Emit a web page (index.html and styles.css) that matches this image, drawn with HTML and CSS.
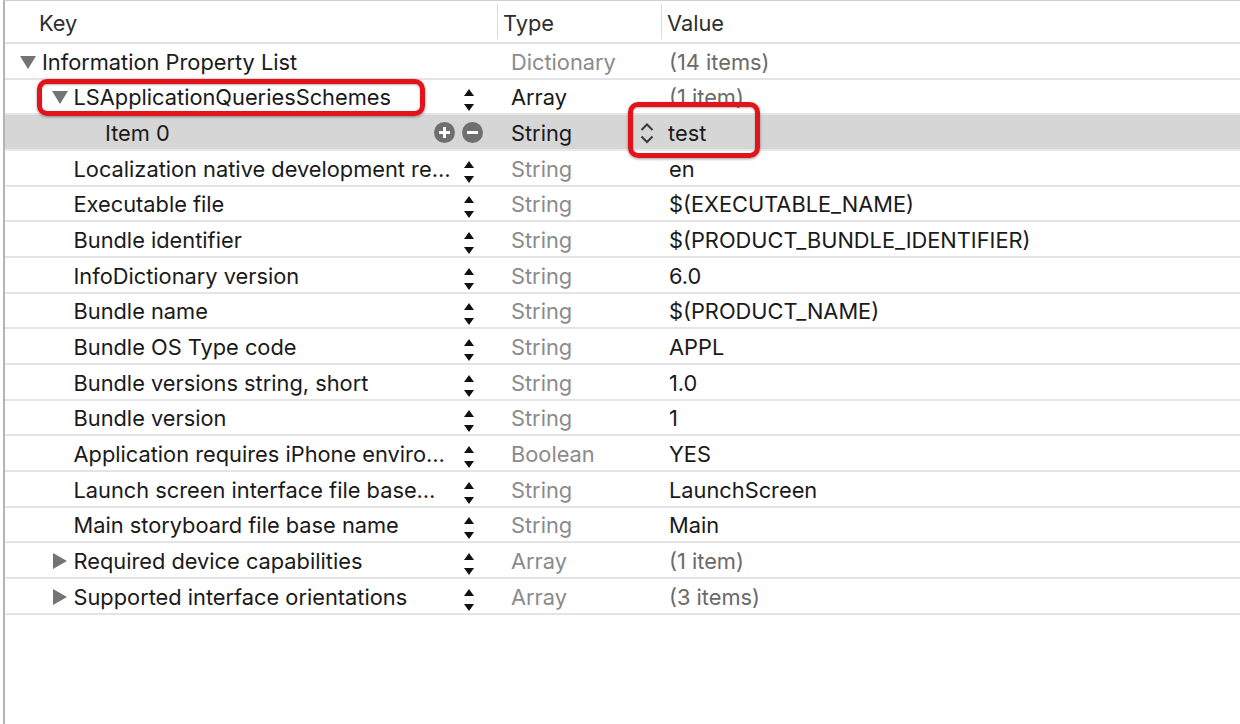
FILE: index.html
```html
<!DOCTYPE html>
<html>
<head>
<meta charset="utf-8">
<link rel="stylesheet" href="styles.css">
</head>
<body>
<div class="plist">
  <div class="header">
    <div class="hcell hkey">Key</div>
    <div class="hcell htype">Type</div>
    <div class="hcell hvalue">Value</div>
  </div>

  <div class="row">
    <div class="cell key lvl0"><span class="disc down"></span><span class="name">Information Property List</span></div>
    <div class="cell type">Dictionary</div>
    <div class="cell value muted">(14 items)</div>
  </div>

  <div class="row">
    <div class="cell key lvl1"><span class="disc down"></span><span class="name">LSApplicationQueriesSchemes</span><span class="stepper"></span><span class="mark mark-key"></span></div>
    <div class="cell type dark">Array</div>
    <div class="cell value muted">(1 item)</div>
  </div>

  <div class="row selected">
    <div class="cell key lvl2"><span class="disc"></span><span class="name">Item 0</span>
      <span class="addrem">
        <svg class="circ" viewBox="0 0 21 21" width="21" height="21"><circle cx="10.5" cy="10.5" r="10.5" fill="#6f6f6f"/><path d="M5 10.5h11M10.5 5v11" stroke="#fff" stroke-width="3"/></svg>
        <svg class="circ" viewBox="0 0 21 21" width="21" height="21"><circle cx="10.5" cy="10.5" r="10.5" fill="#6f6f6f"/><path d="M5 10.5h11" stroke="#fff" stroke-width="3"/></svg>
      </span>
    </div>
    <div class="cell type dark">String</div>
    <div class="cell value popup">
      <svg class="chev" viewBox="0 0 14 24" width="14" height="24"><path d="M1.5 9L7 3.5 12.5 9M1.5 15.5L7 21 12.5 15.5" fill="none" stroke="#3a3a3a" stroke-width="2"/></svg>
      <span>test</span>
      <span class="mark mark-value"></span>
    </div>
  </div>

  <div class="row">
    <div class="cell key lvl1"><span class="disc"></span><span class="name">Localization native development re…</span><span class="stepper"></span></div>
    <div class="cell type">String</div>
    <div class="cell value">en</div>
  </div>
  <div class="row">
    <div class="cell key lvl1"><span class="disc"></span><span class="name">Executable file</span><span class="stepper"></span></div>
    <div class="cell type">String</div>
    <div class="cell value">$(EXECUTABLE_NAME)</div>
  </div>
  <div class="row">
    <div class="cell key lvl1"><span class="disc"></span><span class="name">Bundle identifier</span><span class="stepper"></span></div>
    <div class="cell type">String</div>
    <div class="cell value">$(PRODUCT_BUNDLE_IDENTIFIER)</div>
  </div>
  <div class="row">
    <div class="cell key lvl1"><span class="disc"></span><span class="name">InfoDictionary version</span><span class="stepper"></span></div>
    <div class="cell type">String</div>
    <div class="cell value">6.0</div>
  </div>
  <div class="row">
    <div class="cell key lvl1"><span class="disc"></span><span class="name">Bundle name</span><span class="stepper"></span></div>
    <div class="cell type">String</div>
    <div class="cell value">$(PRODUCT_NAME)</div>
  </div>
  <div class="row">
    <div class="cell key lvl1"><span class="disc"></span><span class="name">Bundle OS Type code</span><span class="stepper"></span></div>
    <div class="cell type">String</div>
    <div class="cell value">APPL</div>
  </div>
  <div class="row">
    <div class="cell key lvl1"><span class="disc"></span><span class="name">Bundle versions string, short</span><span class="stepper"></span></div>
    <div class="cell type">String</div>
    <div class="cell value">1.0</div>
  </div>
  <div class="row">
    <div class="cell key lvl1"><span class="disc"></span><span class="name">Bundle version</span><span class="stepper"></span></div>
    <div class="cell type">String</div>
    <div class="cell value">1</div>
  </div>
  <div class="row">
    <div class="cell key lvl1"><span class="disc"></span><span class="name">Application requires iPhone enviro…</span><span class="stepper"></span></div>
    <div class="cell type">Boolean</div>
    <div class="cell value">YES</div>
  </div>
  <div class="row">
    <div class="cell key lvl1"><span class="disc"></span><span class="name">Launch screen interface file base…</span><span class="stepper"></span></div>
    <div class="cell type">String</div>
    <div class="cell value">LaunchScreen</div>
  </div>
  <div class="row">
    <div class="cell key lvl1"><span class="disc"></span><span class="name">Main storyboard file base name</span><span class="stepper"></span></div>
    <div class="cell type">String</div>
    <div class="cell value">Main</div>
  </div>
  <div class="row">
    <div class="cell key lvl1"><span class="disc right"></span><span class="name">Required device capabilities</span><span class="stepper"></span></div>
    <div class="cell type">Array</div>
    <div class="cell value muted">(1 item)</div>
  </div>
  <div class="row">
    <div class="cell key lvl1"><span class="disc right"></span><span class="name">Supported interface orientations</span><span class="stepper"></span></div>
    <div class="cell type">Array</div>
    <div class="cell value muted">(3 items)</div>
  </div>
</div>
</body>
</html>
```

FILE: styles.css
```css
html, body {
  margin: 0;
  padding: 0;
  background: #ffffff;
}
body {
  font-family: Inter, "Liberation Sans", sans-serif;
  font-size: 21.8px;
  color: #1a1a1a;
  width: 1240px;
  height: 724px;
  overflow: hidden;
}
.plist {
  margin-left: 3px;
  border-left: 2px solid #b4b4b4;
  height: 724px;
  border-top: 1px solid #cfcfcf;
  box-sizing: border-box;
}
.header {
  display: grid;
  grid-template-columns: 492px 164px 1fr;
  height: 41px;
  border-bottom: 2px solid #e0e0e0;
  align-items: center;
}
.hcell {
  color: #2e2e2e;
  height: 33px;
  display: flex;
  align-items: center;
  padding-top: 2px;
}
.hkey { padding-left: 34px; }
.htype, .hvalue {
  border-left: 1px solid #dadada;
  padding-left: 5px;
}
.row {
  display: grid;
  grid-template-columns: 492px 164px 1fr;
  height: 33.67px;
  border-bottom: 2px solid #e4e4e4;
}
.row.selected {
  background: #d6d6d6;
  border-bottom-color: #e8e8e8;
}
.cell {
  display: flex;
  align-items: center;
  white-space: nowrap;
  position: relative;
  padding-top: 2px;
  box-sizing: border-box;
}
.key.lvl0 { padding-left: 15px; }
.key.lvl1 { padding-left: 46.5px; }
.key.lvl2 { padding-left: 78px; }
.disc {
  width: 22px;
  flex: none;
  display: inline-block;
  position: relative;
  height: 16px;
}
.disc.down::before {
  content: "";
  position: absolute;
  left: 0;
  top: 2px;
  border-left: 8px solid transparent;
  border-right: 8px solid transparent;
  border-top: 13px solid #747474;
}
.disc.right::before {
  content: "";
  position: absolute;
  left: 1px;
  top: 0;
  border-top: 8px solid transparent;
  border-bottom: 8px solid transparent;
  border-left: 14px solid #747474;
}
.name {
  flex: 1;
  overflow: hidden;
}
.stepper {
  flex: none;
  width: 11px;
  height: 22px;
  margin-right: 22px;
  margin-top: 6px;
  position: relative;
}
.stepper::before, .stepper::after {
  content: "";
  position: absolute;
  left: 0;
  border-left: 5.5px solid transparent;
  border-right: 5.5px solid transparent;
}
.stepper::before {
  top: 0;
  border-bottom: 7px solid #111;
}
.stepper::after {
  bottom: 0;
  border-top: 7px solid #111;
}
.addrem {
  flex: none;
  display: flex;
  gap: 7px;
  margin-right: 14px;
  margin-top: -2px;
}
.circ { display: block; }
.type {
  color: #8b8b8b;
  padding-left: 14px;
}
.type.dark { color: #1a1a1a; }
.value { padding-left: 8px; }
.value.muted { color: #6a6a6a; }
.value.popup { padding-left: 0; margin-left: -21px; gap: 14px; }
.chev { display: block; margin-top: 0; }
.mark {
  position: absolute;
  border: 5px solid #e3131b;
  border-radius: 10px;
  box-shadow: 0 1px 3px rgba(0,0,0,0.4), inset 0 1px 2px rgba(0,0,0,0.3);
  pointer-events: none;
}
.mark-key {
  left: 32px;
  top: -1px;
  width: 378px;
  height: 27px;
}
.mark-value {
  left: -12px;
  top: -13px;
  width: 122px;
  height: 46px;
}
```
